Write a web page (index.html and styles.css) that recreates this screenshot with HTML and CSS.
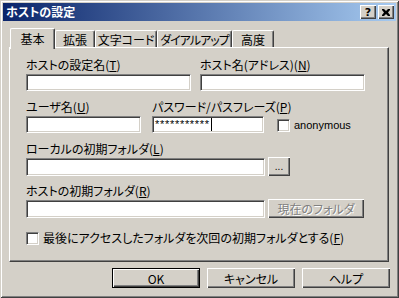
FILE: index.html
```html
<!DOCTYPE html>
<html lang="ja">
<head>
  <meta charset="UTF-8" />
  <title>ホストの設定</title>
  <link rel="stylesheet" href="styles.css">
</head>
<body>
  <div class="window">
    <div class="titlebar">
      <span class="title">ホストの設定</span>
      <div class="caption-buttons">
        <span class="cap-btn">?</span>
        <span class="cap-btn close">
          <svg width="8" height="7" viewBox="0 0 8 7"><path d="M0 0h2l2 2 2-2h2v1L6 3.5 8 6v1H6L4 5 2 7H0V6l2-2.5L0 1z" fill="#000"/></svg>
        </span>
      </div>
    </div>

    <div class="tabs">
      <div class="tab active" style="width:45px">基本</div>
      <div class="tab" style="width:40px">拡張</div>
      <div class="tab" style="width:62px">文字コード</div>
      <div class="tab tight" style="width:75px">ダイアルアップ</div>
      <div class="tab" style="width:42px">高度</div>
    </div>

    <section class="panel">
      <div class="row">
        <div class="field w165">
          <label>ホストの設定名(<u>T</u>)</label>
          <div class="input"></div>
        </div>
        <div class="field w165 col2">
          <label>ホスト名(アドレス)(<u>N</u>)</label>
          <div class="input"></div>
        </div>
      </div>

      <div class="row r2">
        <div class="field w115">
          <label>ユーザ名(<u>U</u>)</label>
          <div class="input"></div>
        </div>
        <div class="field w112 pass">
          <label>パスワード/パスフレーズ(<u>P</u>)</label>
          <div class="input stars">***********<span class="caret"></span></div>
        </div>
        <div class="check anon">
          <span class="box"></span>
          <span class="latin">anonymous</span>
        </div>
      </div>

      <div class="row r3">
        <div class="field w239">
          <label>ローカルの初期フォルダ(<u>L</u>)</label>
          <div class="input-line">
            <div class="input tall"></div>
            <button class="btn browse">...</button>
          </div>
        </div>
      </div>

      <div class="row r4">
        <div class="field w239">
          <label>ホストの初期フォルダ(<u>R</u>)</label>
          <div class="input-line">
            <div class="input tall"></div>
            <button class="btn current" disabled>現在のフォルダ</button>
          </div>
        </div>
      </div>

      <div class="check last">
        <span class="box"></span>
        <span>最後にアクセスしたフォルダを次回の初期フォルダとする(<u>F</u>)</span>
      </div>
    </section>

    <div class="buttons">
      <button class="btn dlg default">OK</button>
      <button class="btn dlg">キャンセル</button>
      <button class="btn dlg">ヘルプ</button>
    </div>
  </div>
</body>
</html>
```

FILE: styles.css
```css
* {
  box-sizing: border-box;
  font-family: "Noto Sans CJK JP", "Noto Sans", sans-serif;
  font-feature-settings: "palt";
}
body {
  margin: 0;
  padding: 0;
  background: #d4d0c8;
}
.window {
  width: 399px;
  height: 298px;
  background: #d4d0c8;
  color: #000;
  font-size: 12px;
  box-shadow: inset 1px 1px #d4d0c8, inset -1px -1px #404040,
              inset 2px 2px #fff, inset -2px -2px #808080;
  overflow: hidden;
}
.titlebar {
  margin: 3px 3px 0 3px;
  height: 18px;
  display: flex;
  align-items: center;
  justify-content: space-between;
  padding: 0 2px 0 3px;
  background: linear-gradient(to right, #0a246a, #a6caf0);
}
.title {
  color: #fff;
  font-weight: bold;
  font-size: 12px;
  line-height: 14px;
}
.caption-buttons {
  display: flex;
  gap: 2px;
}
.cap-btn {
  width: 16px;
  height: 14px;
  display: flex;
  align-items: center;
  justify-content: center;
  font-family: "DejaVu Sans", sans-serif;
  font-weight: bold;
  font-size: 11px;
  line-height: 1;
  background: #d4d0c8;
  box-shadow: inset 1px 1px #fff, inset -1px -1px #404040, inset -2px -2px #808080;
}

.tabs {
  display: flex;
  align-items: flex-end;
  height: 19px;
  margin: 7px 0 0 10px;
  position: relative;
  z-index: 1;
}
.tab {
  height: 17px;
  line-height: 15px;
  text-align: center;
  font-size: 12px;
  white-space: nowrap;
  padding-top: 1px;
  border-top: 1px solid #fff;
  border-left: 1px solid #fff;
  border-right: 1px solid #404040;
  box-shadow: inset -1px 0 #808080;
  border-radius: 2px 2px 0 0;
}
.tab.tight {
  letter-spacing: -1px;
}
.tab.active {
  height: 21px;
  margin-bottom: -2px;
  padding-top: 2px;
  background: #d4d0c8;
}

.panel {
  margin-left: 9px;
  width: 380px;
  height: 215px;
  padding: 10px 0 0 16px;
  border-top: 1px solid #fff;
  border-left: 1px solid #fff;
  border-right: 1px solid #404040;
  border-bottom: 1px solid #404040;
  box-shadow: inset -1px -1px #808080;
}
.row {
  display: flex;
  align-items: flex-start;
}
.r2 { margin-top: 9px; }
.r3 { margin-top: 9px; }
.r4 { margin-top: 8px; }
.field label {
  display: block;
  line-height: 14px;
  height: 14px;
  margin-bottom: 2px;
  white-space: nowrap;
}
.w165 { width: 165px; }
.w115 { width: 115px; }
.w112 { width: 112px; }
.col2 { margin-left: 9px; }
.pass { margin-left: 11px; }
.input {
  height: 17px;
  width: 100%;
  background: #fff;
  border: 1px solid;
  border-color: #808080 #fff #fff #808080;
  box-shadow: inset 1px 1px #404040, inset -1px -1px #d4d0c8;
}
.input.tall { height: 18px; width: 239px; }
.stars {
  font-family: "Liberation Sans", sans-serif;
  font-size: 11px;
  line-height: 15px;
  padding-left: 2px;
  letter-spacing: 0.7px;
  display: flex;
  align-items: center;
}
.caret {
  display: inline-block;
  width: 1px;
  height: 13px;
  background: #000;
  margin-left: 1px;
}
.input-line {
  display: flex;
  align-items: flex-start;
  gap: 3px;
  margin-top: -1px;
}
.input-line .input { margin-top: 1px; }

.check {
  display: flex;
  align-items: center;
  gap: 4px;
  line-height: 14px;
  white-space: nowrap;
}
.box {
  width: 13px;
  height: 13px;
  background: #fff;
  border: 1px solid;
  border-color: #808080 #fff #fff #808080;
  box-shadow: inset 1px 1px #404040, inset -1px -1px #d4d0c8;
  flex: none;
}
.anon {
  margin-left: 13px;
  margin-top: 18px;
}
.latin {
  font-family: "Liberation Sans", sans-serif;
  font-size: 11px;
}
.last {
  margin-top: 13px;
}

.btn {
  margin: 0;
  padding: 0;
  font-size: 12px;
  background: #d4d0c8;
  color: #000;
  border: none;
  white-space: nowrap;
  box-shadow: inset 1px 1px #fff, inset -1px -1px #404040, inset -2px -2px #808080;
}
.browse {
  width: 22px;
  height: 19px;
  line-height: 12px;
  font-family: "Liberation Sans", sans-serif;
  font-size: 10px;
}
.current {
  width: 96px;
  height: 19px;
  color: #808080;
  text-shadow: 1px 1px #fff;
}

.buttons {
  display: flex;
  gap: 7px;
  margin: 6px 0 0 112px;
}
.dlg {
  width: 88px;
  height: 20px;
}
.default {
  box-shadow: inset 0 0 0 1px #000, inset 2px 2px #fff,
              inset -2px -2px #404040, inset -3px -3px #808080;
}
```
